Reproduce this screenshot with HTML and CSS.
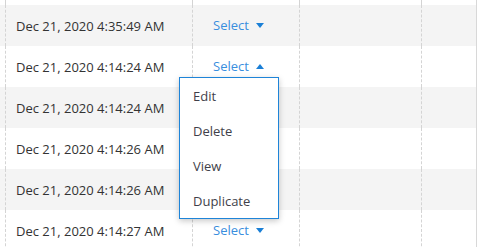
FILE: index.html
```html
<!DOCTYPE html>
<html>
<head>
<meta charset="utf-8">
<link rel="stylesheet" href="styles.css">
</head>
<body>
<div class="table">
  <div class="row spacer"><div class="c c0"></div><div class="c c1"></div><div class="c c2"></div><div class="c c3"></div><div class="c c4"></div></div>
  <div class="row alt"><div class="c c0"></div><div class="c c1 date">Dec 21, 2020 4:35:49 AM</div><div class="c c2"><span class="sel">Select<i class="caret down"></i></span></div><div class="c c3"></div><div class="c c4"></div></div>
  <div class="row"><div class="c c0"></div><div class="c c1 date">Dec 21, 2020 4:14:24 AM</div><div class="c c2 anchor"><span class="sel">Select<i class="caret up"></i></span>
    <ul class="menu">
      <li>Edit</li>
      <li>Delete</li>
      <li>View</li>
      <li>Duplicate</li>
    </ul>
  </div><div class="c c3"></div><div class="c c4"></div></div>
  <div class="row alt"><div class="c c0"></div><div class="c c1 date">Dec 21, 2020 4:14:24 AM</div><div class="c c2"><span class="sel">Select<i class="caret down"></i></span></div><div class="c c3"></div><div class="c c4"></div></div>
  <div class="row"><div class="c c0"></div><div class="c c1 date">Dec 21, 2020 4:14:26 AM</div><div class="c c2"><span class="sel">Select<i class="caret down"></i></span></div><div class="c c3"></div><div class="c c4"></div></div>
  <div class="row alt"><div class="c c0"></div><div class="c c1 date">Dec 21, 2020 4:14:26 AM</div><div class="c c2"><span class="sel">Select<i class="caret down"></i></span></div><div class="c c3"></div><div class="c c4"></div></div>
  <div class="row"><div class="c c0"></div><div class="c c1 date">Dec 21, 2020 4:14:27 AM</div><div class="c c2"><span class="sel">Select<i class="caret down"></i></span></div><div class="c c3"></div><div class="c c4"></div></div>
</div>
</body>
</html>
```
FILE: styles.css
```css
html, body {
  margin: 0;
  padding: 0;
  background: #fff;
}
body {
  font-family: "Open Sans", "Liberation Sans", sans-serif;
  font-size: 13px;
  overflow: hidden;
}
.table {
  width: 477px;
}
.row {
  display: grid;
  grid-template-columns: 5px 187px 107px 122px 56px;
  height: 41px;
}
.row.spacer {
  height: 5px;
}
.row.alt {
  background: #f4f4f4;
}
.c {
  display: flex;
  align-items: center;
  min-width: 0;
}
.c1, .c2, .c3, .c4 {
  border-left: 1px dashed #d4d4d4;
}
.c4 {
  border-right: 1px solid #d8d8d8;
  box-sizing: border-box;
}
.date {
  padding-left: 10px;
  color: #333;
  white-space: nowrap;
}
.c2 {
  padding-left: 20px;
}
.anchor {
  position: relative;
}
.sel {
  color: #3a8ede;
  display: inline-flex;
  align-items: center;
  line-height: 1;
}
.caret {
  display: inline-block;
  width: 0;
  height: 0;
  margin-left: 7px;
  border-left: 4px solid transparent;
  border-right: 4px solid transparent;
}
.caret.down {
  border-top: 5px solid #1a7fd6;
}
.caret.up {
  border-bottom: 5px solid #1a7fd6;
}
.menu {
  position: absolute;
  left: -14px;
  top: 31px;
  width: 100px;
  box-sizing: border-box;
  margin: 0;
  padding: 0;
  list-style: none;
  background: #fff;
  border: 1px solid #1e84d8;
  box-shadow: 0 2px 6px rgba(0, 0, 0, 0.22);
  z-index: 5;
}
.menu li {
  height: 35px;
  display: flex;
  align-items: center;
  padding-left: 13px;
  color: #3f3f4a;
}
```
